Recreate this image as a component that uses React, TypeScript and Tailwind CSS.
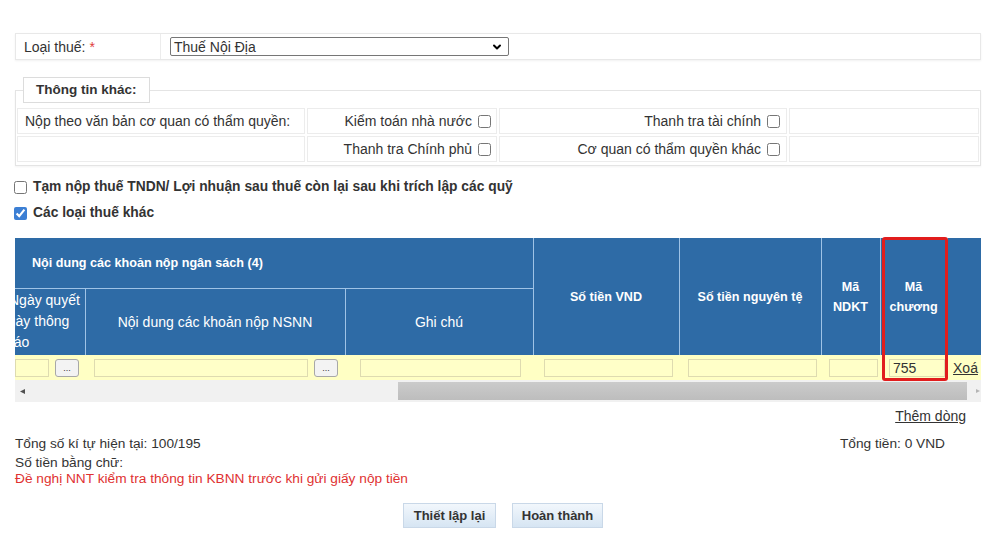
import { ChevronDown } from 'lucide-react';

const hdrBorder = 'border-[#9fc3e6]';

function Field({ w, value }: { w: string; value?: string }) {
  return (
    <div className={`${w} h-[18px] border border-[#dedbb0] bg-[#ffffc8] pl-[3px] leading-[16px] text-[14px]`}>
      {value}
    </div>
  );
}

function DotsButton() {
  return (
    <div className="w-[24px] h-[18px] border border-[#a8a8a8] rounded-[3px] bg-[#f3f3f3] flex items-end justify-center pb-[3px] text-[9px] leading-[9px] text-[#333]">
      ...
    </div>
  );
}

function Check({ checked }: { checked?: boolean }) {
  return <input type="checkbox" defaultChecked={checked} className="w-[13px] h-[13px] accent-[#3c7fd4] shrink-0" />;
}

export default function App() {
  return (
    <div className="min-h-[546px] bg-white font-['Liberation_Sans',Arial,sans-serif] text-[14px] leading-[16px] text-[#333] pl-[15px] pr-[11px] pt-[33px]">
      {/* Loại thuế */}
      <div className="flex h-[27px] border border-[#e8e8e8] shadow-[0_1px_2px_rgba(0,0,0,0.06)]">
        <div className="w-[145px] flex items-center pl-[8px] border-r border-[#ececec]">
          Loại thuế:<span className="text-[#e03b3b] ml-[4px]">*</span>
        </div>
        <div className="flex-1 flex items-center pl-[9px]">
          <div className="w-[339px] h-[19px] border border-[#767676] rounded-[2px] flex items-center justify-between pl-[3px] pr-[5px]">
            <span>Thuế Nội Địa</span>
            <ChevronDown size={12} strokeWidth={4} className="text-black" />
          </div>
        </div>
      </div>

      {/* Thông tin khác */}
      <fieldset className="mt-[17px] border border-[#e4e4e4] px-[1px] pt-[5px] pb-[3px] shadow-[0_1px_2px_rgba(0,0,0,0.05)]">
        <legend className="ml-[6px] h-[26px] px-[12px] border border-[#dcdcdc] bg-white flex items-center font-bold text-[13.5px]">
          Thông tin khác:
        </legend>
        <div className="grid grid-cols-[288px_190px_288px_1fr] gap-[2px]">
          <div className="h-[26px] border border-[#ececec] flex items-center pl-[7px]">Nộp theo văn bản cơ quan có thẩm quyền:</div>
          <div className="h-[26px] border border-[#ececec] flex items-center justify-end gap-[6px] pr-[5px]">
            Kiểm toán nhà nước <Check />
          </div>
          <div className="h-[26px] border border-[#ececec] flex items-center justify-end gap-[6px] pr-[6px]">
            Thanh tra tài chính <Check />
          </div>
          <div className="h-[26px] border border-[#ececec]" />
          <div className="h-[26px] border border-[#ececec]" />
          <div className="h-[26px] border border-[#ececec] flex items-center justify-end gap-[6px] pr-[5px]">
            Thanh tra Chính phủ <Check />
          </div>
          <div className="h-[26px] border border-[#ececec] flex items-center justify-end gap-[6px] pr-[6px]">
            Cơ quan có thẩm quyền khác <Check />
          </div>
          <div className="h-[26px] border border-[#ececec]" />
        </div>
      </fieldset>

      {/* Options */}
      <div className="mt-[12px] flex flex-col gap-[8px] font-bold text-[13.8px] -ml-[1px]">
        <label className="flex items-center gap-[6px] h-[18px]">
          <Check /> Tạm nộp thuế TNDN/ Lợi nhuận sau thuế còn lại sau khi trích lập các quỹ
        </label>
        <label className="flex items-center gap-[6px] h-[18px]">
          <Check checked /> Các loại thuế khác
        </label>
      </div>

      {/* Bảng */}
      <div className="relative mt-[16px]">
        <table className="table-fixed border-collapse w-[966px]">
          <colgroup>
            <col className="w-[70px]" />
            <col className="w-[260px]" />
            <col className="w-[188px]" />
            <col className="w-[146px]" />
            <col className="w-[142px]" />
            <col className="w-[59px]" />
            <col className="w-[67px]" />
            <col className="w-[34px]" />
          </colgroup>
          <thead className="bg-[#2e6ba6] text-white">
            <tr className="h-[50px]">
              <th colSpan={3} className={`text-left pl-[17px] font-bold text-[12.6px] border-r border-b ${hdrBorder}`}>
                Nội dung các khoản nộp ngân sách (4)
              </th>
              <th rowSpan={2} className={`text-center font-bold text-[12.6px] border-r ${hdrBorder}`}>Số tiền VND</th>
              <th rowSpan={2} className={`text-center font-bold text-[12.6px] border-r ${hdrBorder}`}>Số tiền nguyên tệ</th>
              <th rowSpan={2} className={`text-center font-bold text-[12.6px] leading-[20px] border-r ${hdrBorder}`}>Mã<br />NDKT</th>
              <th rowSpan={2} className={`text-center font-bold text-[12.6px] leading-[20px] border-r ${hdrBorder}`}>Mã<br />chương</th>
              <th rowSpan={2} />
            </tr>
            <tr className="h-[67px]">
              <th className={`font-normal text-[14px] leading-[21px] text-left overflow-hidden border-r ${hdrBorder}`}>
                <div className="whitespace-nowrap -ml-[6px]">Ngày quyết</div>
                <div className="whitespace-nowrap -ml-[15px]">ngày thông</div>
                <div className="whitespace-nowrap -ml-[9px]">báo</div>
              </th>
              <th className={`font-normal text-[14px] text-center border-r ${hdrBorder}`}>Nội dung các khoản nộp NSNN</th>
              <th className={`font-normal text-[14px] text-center border-r ${hdrBorder}`}>Ghi chú</th>
            </tr>
          </thead>
          <tbody>
            <tr className="h-[25px] bg-[#ffffc4]">
              <td>
                <div className="flex items-center gap-[6px]">
                  <Field w="w-[34px]" />
                  <DotsButton />
                </div>
              </td>
              <td>
                <div className="flex items-center gap-[6px] pl-[9px]">
                  <Field w="w-[214px]" />
                  <DotsButton />
                </div>
              </td>
              <td className="pl-[15px]"><Field w="w-[161px]" /></td>
              <td className="pl-[11px]"><Field w="w-[129px]" /></td>
              <td className="pl-[9px]"><Field w="w-[129px]" /></td>
              <td className="pl-[8px]"><Field w="w-[49px]" /></td>
              <td className="pl-[9px]"><Field w="w-[56px]" value="755" /></td>
              <td className="pl-[6px] underline">Xoá</td>
            </tr>
          </tbody>
        </table>

        {/* thanh cuộn ngang */}
        <div className="w-[966px] h-[22px] bg-[#f1f1f1] flex items-center">
          <svg width="5" height="5" viewBox="0 0 5 5" className="ml-[5px]">
            <polygon points="5,0 5,5 0,2.5" fill="#505050" />
          </svg>
          <div className="ml-[373px] w-[569px] h-[18px] bg-linear-to-b from-[#cbcbcb] to-[#bdbdbd]" />
          <svg width="4" height="4" viewBox="0 0 4 4" className="ml-[9px]">
            <polygon points="0,0 4,2 0,4" fill="#b5b5b5" />
          </svg>
        </div>

        <div className="absolute left-[867px] top-[-1px] w-[66px] h-[144px] border-[3px] border-[#e11d1d] rounded-[3px] pointer-events-none" />
      </div>

      <div className="mt-[6px] flex justify-end pr-[15px]">
        <span className="underline">Thêm dòng</span>
      </div>

      <div className="text-[13.7px]">
        <div className="mt-[12px] flex justify-between">
          <span>Tổng số kí tự hiện tại: 100/195</span>
          <span className="mr-[36px]">Tổng tiền: 0 VND</span>
        </div>
        <div className="mt-[3px]">Số tiền bằng chữ:</div>
        <div className="text-[#e03131]">Đề nghị NNT kiểm tra thông tin KBNN trước khi gửi giấy nộp tiền</div>
      </div>

      <div className="mt-[16px] flex justify-center gap-[16px] pl-[10px]">
        <button className="w-[93px] h-[25px] border border-[#c9d8e8] bg-linear-to-b from-[#f2f7fc] to-[#d6e5f3] font-bold text-[13px] text-[#333]">
          Thiết lập lại
        </button>
        <button className="w-[91px] h-[25px] border border-[#c9d8e8] bg-linear-to-b from-[#f2f7fc] to-[#d6e5f3] font-bold text-[13px] text-[#333]">
          Hoàn thành
        </button>
      </div>
    </div>
  );
}
